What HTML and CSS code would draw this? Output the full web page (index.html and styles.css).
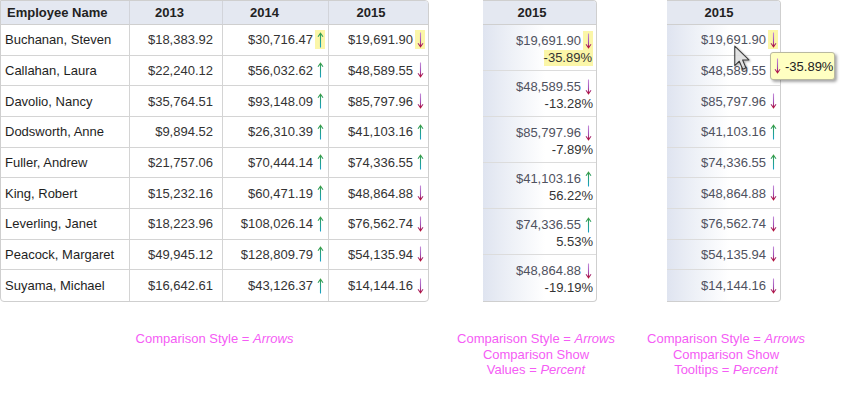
FILE: index.html
```html
<!DOCTYPE html>
<html>
<head>
<meta charset="utf-8">
<link rel="stylesheet" href="styles.css">
</head>
<body>
<svg class="defs" width="0" height="0" aria-hidden="true">
  <defs>
    <linearGradient id="gUp" x1="0" y1="0" x2="0" y2="16" gradientUnits="userSpaceOnUse">
      <stop offset="0" stop-color="#3c9c34"/>
      <stop offset="0.5" stop-color="#22a08a"/>
      <stop offset="1" stop-color="#1aa0cc"/>
    </linearGradient>
    <linearGradient id="gDown" x1="0" y1="0" x2="0" y2="16" gradientUnits="userSpaceOnUse">
      <stop offset="0" stop-color="#c890dc"/>
      <stop offset="0.55" stop-color="#a050b8"/>
      <stop offset="1" stop-color="#b4001c"/>
    </linearGradient>
    <symbol id="up" viewBox="0 0 7 16">
      <path d="M3.5 1.2 V15.5 M1 4.8 L3.5 1.2 L6 4.8" fill="none" stroke="url(#gUp)" stroke-width="1.1"/>
    </symbol>
    <symbol id="down" viewBox="0 0 7 16">
      <path d="M3.5 0.5 V14.8 M1 11.2 L3.5 14.8 L6 11.2" fill="none" stroke="url(#gDown)" stroke-width="1.1"/>
    </symbol>
  </defs>
</svg>

<div class="page">
  <div class="tables">
    <div class="grid main">
      <div class="hd name">Employee Name</div>
      <div class="hd y13">2013</div>
      <div class="hd y14">2014</div>
      <div class="hd y15 last">2015</div>

      <div class="c name">Buchanan, Steven</div>
      <div class="c v13">$18,383.92</div>
      <div class="c v"><span>$30,716.47</span><span class="arr hl"><svg><use href="#up"/></svg></span></div>
      <div class="c v last"><span>$19,691.90</span><span class="arr hl"><svg><use href="#down"/></svg></span></div>

      <div class="c name">Callahan, Laura</div>
      <div class="c v13">$22,240.12</div>
      <div class="c v"><span>$56,032.62</span><span class="arr"><svg><use href="#up"/></svg></span></div>
      <div class="c v last"><span>$48,589.55</span><span class="arr"><svg><use href="#down"/></svg></span></div>

      <div class="c name">Davolio, Nancy</div>
      <div class="c v13">$35,764.51</div>
      <div class="c v"><span>$93,148.09</span><span class="arr"><svg><use href="#up"/></svg></span></div>
      <div class="c v last"><span>$85,797.96</span><span class="arr"><svg><use href="#down"/></svg></span></div>

      <div class="c name">Dodsworth, Anne</div>
      <div class="c v13">$9,894.52</div>
      <div class="c v"><span>$26,310.39</span><span class="arr"><svg><use href="#up"/></svg></span></div>
      <div class="c v last"><span>$41,103.16</span><span class="arr"><svg><use href="#up"/></svg></span></div>

      <div class="c name">Fuller, Andrew</div>
      <div class="c v13">$21,757.06</div>
      <div class="c v"><span>$70,444.14</span><span class="arr"><svg><use href="#up"/></svg></span></div>
      <div class="c v last"><span>$74,336.55</span><span class="arr"><svg><use href="#up"/></svg></span></div>

      <div class="c name">King, Robert</div>
      <div class="c v13">$15,232.16</div>
      <div class="c v"><span>$60,471.19</span><span class="arr"><svg><use href="#up"/></svg></span></div>
      <div class="c v last"><span>$48,864.88</span><span class="arr"><svg><use href="#down"/></svg></span></div>

      <div class="c name">Leverling, Janet</div>
      <div class="c v13">$18,223.96</div>
      <div class="c v"><span>$108,026.14</span><span class="arr"><svg><use href="#up"/></svg></span></div>
      <div class="c v last"><span>$76,562.74</span><span class="arr"><svg><use href="#down"/></svg></span></div>

      <div class="c name">Peacock, Margaret</div>
      <div class="c v13">$49,945.12</div>
      <div class="c v"><span>$128,809.79</span><span class="arr"><svg><use href="#up"/></svg></span></div>
      <div class="c v last"><span>$54,135.94</span><span class="arr"><svg><use href="#down"/></svg></span></div>

      <div class="c name bot">Suyama, Michael</div>
      <div class="c v13 bot">$16,642.61</div>
      <div class="c v bot"><span>$43,126.37</span><span class="arr"><svg><use href="#up"/></svg></span></div>
      <div class="c v last bot"><span>$14,144.16</span><span class="arr"><svg><use href="#down"/></svg></span></div>
    </div>

    <div class="grid side pctgrid">
      <div class="hd sidehd">2015</div>
      <div class="c pc">
        <div class="line"><span>$19,691.90</span><span class="arr hl"><svg><use href="#down"/></svg></span></div>
        <div class="pct"><span class="hlp">-35.89%</span></div>
      </div>
      <div class="c pc">
        <div class="line"><span>$48,589.55</span><span class="arr"><svg><use href="#down"/></svg></span></div>
        <div class="pct"><span>-13.28%</span></div>
      </div>
      <div class="c pc">
        <div class="line"><span>$85,797.96</span><span class="arr"><svg><use href="#down"/></svg></span></div>
        <div class="pct"><span>-7.89%</span></div>
      </div>
      <div class="c pc">
        <div class="line"><span>$41,103.16</span><span class="arr"><svg><use href="#up"/></svg></span></div>
        <div class="pct"><span>56.22%</span></div>
      </div>
      <div class="c pc">
        <div class="line"><span>$74,336.55</span><span class="arr"><svg><use href="#up"/></svg></span></div>
        <div class="pct"><span>5.53%</span></div>
      </div>
      <div class="c pc bot">
        <div class="line"><span>$48,864.88</span><span class="arr"><svg><use href="#down"/></svg></span></div>
        <div class="pct"><span>-19.19%</span></div>
      </div>
    </div>

    <div class="grid side tipgrid">
      <div class="hd sidehd2">2015</div>
      <div class="c sv"><span>$19,691.90</span><span class="arr hl"><svg><use href="#down"/></svg></span></div>
      <div class="c sv"><span>$48,589.55</span><span class="arr"><svg><use href="#down"/></svg></span></div>
      <div class="c sv"><span>$85,797.96</span><span class="arr"><svg><use href="#down"/></svg></span></div>
      <div class="c sv"><span>$41,103.16</span><span class="arr"><svg><use href="#up"/></svg></span></div>
      <div class="c sv"><span>$74,336.55</span><span class="arr"><svg><use href="#up"/></svg></span></div>
      <div class="c sv"><span>$48,864.88</span><span class="arr"><svg><use href="#down"/></svg></span></div>
      <div class="c sv"><span>$76,562.74</span><span class="arr"><svg><use href="#down"/></svg></span></div>
      <div class="c sv"><span>$54,135.94</span><span class="arr"><svg><use href="#down"/></svg></span></div>
      <div class="c sv bot"><span>$14,144.16</span><span class="arr"><svg><use href="#down"/></svg></span></div>
    </div>
  </div>

  <div class="captions">
    <div class="cap cap1">Comparison Style = <i>Arrows</i></div>
    <div class="cap cap2">Comparison Style = <i>Arrows</i><br>Comparison Show<br>Values = <i>Percent</i></div>
    <div class="cap cap3">Comparison Style = <i>Arrows</i><br>Comparison Show<br>Tooltips = <i>Percent</i></div>
  </div>

  <div class="tooltip"><span class="arr"><svg><use href="#down"/></svg></span><span>-35.89%</span></div>
  <svg class="cursor" width="19" height="29" viewBox="0 0 16 24">
    <path d="M1.5 1.5 L1.5 18 L5.3 14.3 L8.2 21 L10.9 19.8 L8.1 13.2 L13.4 13.2 Z" fill="#ececec" fill-opacity="0.8" stroke="#3a3a3a" stroke-width="0.9" stroke-linejoin="round"/>
  </svg>
</div>
</body>
</html>
```

FILE: styles.css
```css
* { box-sizing: border-box; }

html, body {
  margin: 0;
  padding: 0;
  background: #fff;
}

body {
  font-family: "Liberation Sans", Arial, sans-serif;
  font-size: 13px;
  color: #222;
}

.defs {
  position: absolute;
  width: 0;
  height: 0;
  overflow: hidden;
}

.page {
  position: relative;
  width: 851px;
  height: 402px;
}

.tables {
  display: flex;
  align-items: flex-start;
}

.grid {
  display: grid;
  border: 1px solid #cfcfcf;
  background: #fff;
  overflow: hidden;
}

.main {
  width: 429px;
  height: 302px;
  grid-template-columns: 129px 93px 106px 99px;
  grid-template-rows: 24px repeat(9, 1fr);
  border-radius: 0 4px 4px 4px;
}

.side {
  border-left: none;
  border-radius: 0 4px 4px 0;
  width: 114px;
  height: 302px;
  grid-template-columns: 1fr;
  background: linear-gradient(to right, #dfe4f0 0%, #eef1f7 25%, #ffffff 55%, #ffffff 100%);
}

.pctgrid {
  margin-left: 54px;
  grid-template-rows: 24px repeat(6, 1fr);
}

.tipgrid {
  margin-left: 70px;
  grid-template-rows: 24px repeat(9, 1fr);
}

.hd {
  background: #e4e8f1;
  font-weight: bold;
  color: #222;
  display: flex;
  align-items: center;
  justify-content: center;
  border-right: 1px solid #d2d4da;
  border-bottom: 1px solid #cfcfcf;
}

.hd.name { justify-content: flex-start; padding-left: 6px; }
.hd.y13 { padding-right: 13px; }
.hd.y14 { padding-right: 22px; }
.hd.y15 { padding-right: 15px; }
.hd.sidehd { padding-right: 15px; border-right: none; }
.hd.sidehd2 { padding-right: 9px; border-right: none; }
.hd.last { border-right: none; }

.c {
  border-right: 1px solid #d4d4d4;
  border-bottom: 1px solid #d4d4d4;
  display: flex;
  align-items: center;
}

.c.last { border-right: none; }
.c.bot { border-bottom: none; }

.c.name {
  padding-left: 4px;
  color: #1e1e1e;
}

.c.v13 {
  justify-content: flex-end;
  padding-right: 9px;
  color: #333;
}

.c.v {
  justify-content: flex-end;
  padding-right: 3px;
  color: #333;
}

.c.v .arr, .c.sv .arr, .line .arr { margin-left: 2px; }

.arr {
  width: 10px;
  height: 19px;
  display: inline-flex;
  align-items: center;
  justify-content: center;
}

.arr svg {
  width: 7px;
  height: 16px;
  display: block;
}

.hl { background: #fbf6a8; }

.side .c {
  border-right: none;
  border-bottom: 1px solid #dcdcdc;
}
.side .c.bot { border-bottom: none; }

.pc {
  flex-direction: column;
  align-items: stretch;
  justify-content: flex-start;
  padding-top: 6px;
  padding-right: 3px;
}

.line {
  display: flex;
  justify-content: flex-end;
  align-items: center;
  height: 19px;
  color: #4f5260;
}

.pct {
  display: flex;
  justify-content: flex-end;
  height: 16px;
  line-height: 16px;
  color: #333;
}

.hlp {
  background: #fbf6a8;
  padding: 0 1px 0 0;
}

.sv {
  justify-content: flex-end;
  padding-right: 2px;
  color: #4f5260;
}

.captions {
  display: flex;
  margin-top: 29px;
  color: #f55cf5;
  line-height: 15.5px;
}

.cap {
  text-align: center;
  white-space: nowrap;
}

.cap1 { width: 429px; }
.cap2 { width: 160px; margin-left: 27px; }
.cap3 { width: 160px; margin-left: 30px; }

.tooltip {
  position: absolute;
  left: 770px;
  top: 52px;
  width: 65px;
  height: 28px;
  background: #ffffc2;
  border: 1px solid #b9b9a0;
  border-radius: 3px;
  box-shadow: 2px 2px 3px rgba(0, 0, 0, 0.35);
  display: flex;
  align-items: center;
  padding-left: 1px;
  color: #222;
}

.tooltip .arr { margin-right: 3px; }

.cursor {
  position: absolute;
  left: 733px;
  top: 44px;
  filter: drop-shadow(1px 1px 1px rgba(0, 0, 0, 0.35));
}
```
